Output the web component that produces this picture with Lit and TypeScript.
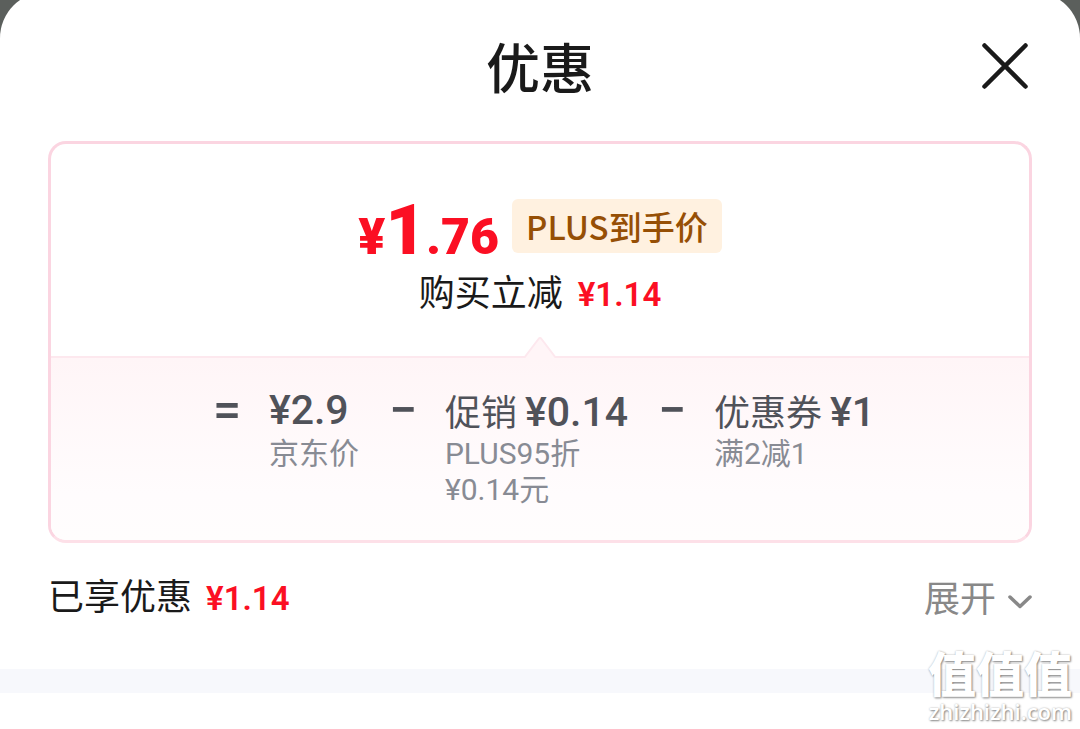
import { LitElement, html, css } from "lit";
import { customElement, state } from "lit/decorators.js";

interface Term {
  op: string;
  label: string;
  amount: string;
  notes: string[];
}

const TERMS: Term[] = [
  { op: "=", label: "", amount: "¥2.9", notes: ["京东价"] },
  { op: "−", label: "促销", amount: "¥0.14", notes: ["PLUS95折", "¥0.14元"] },
  { op: "−", label: "优惠券", amount: "¥1", notes: ["满2减1"] },
];

@customElement("app-root")
export class AppRoot extends LitElement {
  @state() private expanded = false;

  static styles = css`
    :host {
      display: block;
      min-height: 100vh;
      overflow: hidden;
      position: relative;
      background: #5b5f5c;
      color: #1a1a1a;
      font-family: "Noto Sans CJK SC", "Noto Sans", sans-serif;
    }
    * {
      box-sizing: border-box;
    }
    button {
      border: 0;
      padding: 0;
      background: none;
      color: inherit;
      font: inherit;
      cursor: pointer;
    }
    svg {
      display: block;
    }
    h1,
    p {
      margin: 0;
      font-weight: 400;
    }
    .sheet {
      display: flow-root;
      min-height: calc(100vh + 8px);
      margin-top: -8px;
      background: #fff;
      border-radius: 46px 46px 0 0;
    }
    .header {
      display: grid;
      grid-template-columns: 48px 1fr 48px;
      align-items: center;
      padding: 34px 51px 0;
      height: 113px;
    }
    .title {
      grid-column: 2;
      text-align: center;
      font-size: 54px;
      line-height: 80px;
      font-weight: 500;
    }
    .card {
      margin: 36px 48px 0;
      border: 3px solid #fbd5e1;
      border-bottom-color: #fde0e8;
      border-radius: 18px;
      overflow: hidden;
    }
    .summary {
      height: 212px;
      padding-top: 50px;
    }
    .price-row {
      display: flex;
      justify-content: center;
      gap: 13px;
    }
    .price {
      display: flex;
      align-items: baseline;
      font-family: Roboto, sans-serif;
      font-weight: 900;
      font-size: 50px;
      line-height: 72px;
      color: #fb0f23;
    }
    .price-int {
      font-size: 70px;
    }
    .tag {
      height: 54px;
      margin-top: 5px;
      padding: 0 14px;
      border-radius: 6px;
      background: #fff1e0;
      color: #964f05;
      font-size: 33px;
      line-height: 54px;
      font-weight: 500;
    }
    .saving {
      display: flex;
      justify-content: center;
      align-items: baseline;
      gap: 15px;
      font-size: 36px;
      line-height: 34px;
    }
    .red {
      font-family: Roboto, sans-serif;
      font-weight: 600;
      font-size: 33px;
      color: #fb0f23;
    }
    .detail {
      position: relative;
      height: 184px;
      padding-top: 28px;
      border-top: 2px solid #fde8ee;
      background: linear-gradient(#fff5f7, #fffcfd 75%, #fffdfd);
    }
    .notch {
      position: absolute;
      left: 50%;
      top: -22px;
      transform: translateX(-50%);
    }
    .terms {
      display: flex;
      justify-content: center;
      gap: 30px;
      padding-left: 8px;
    }
    .op,
    .amount {
      font-family: Roboto, sans-serif;
      font-weight: 500;
      font-size: 41px;
      line-height: 48px;
      color: #505259;
    }
    .op {
      width: 26px;
      font-size: 50px;
      text-align: center;
    }
    .head {
      display: flex;
      align-items: baseline;
      gap: 8px;
      height: 50px;
      line-height: 48px;
      font-size: 36px;
      color: #505259;
    }
    .note {
      font-family: Roboto, "Noto Sans CJK SC", sans-serif;
      font-size: 30px;
      line-height: 36px;
      color: #888b94;
    }
    .footer {
      display: flex;
      justify-content: space-between;
      align-items: center;
      height: 126px;
      padding: 0 48px 20px;
      font-size: 36px;
      line-height: 48px;
    }
    .got {
      display: flex;
      align-items: baseline;
      gap: 14px;
    }
    .expand {
      display: flex;
      align-items: center;
      gap: 12px;
      color: #888;
    }
    .expand svg {
      margin-top: 12px;
    }
    .divider {
      height: 24px;
      background: #f7f8fc;
    }
    .mark {
      position: absolute;
      right: 8px;
      bottom: 5px;
      color: #fff;
      text-align: right;
      text-shadow: 1px 1px 2px #888, 0 0 2px #bbb;
      pointer-events: none;
    }
    .mark-top {
      font-size: 48px;
      line-height: 54px;
      font-weight: 900;
    }
    .mark-site {
      font-family: "Open Sans", sans-serif;
      font-size: 22px;
      line-height: 26px;
      font-weight: 600;
    }
  `;

  private toggle() {
    this.expanded = !this.expanded;
  }

  render() {
    return html`
      <main class="sheet">
        <header class="header">
          <h1 class="title">优惠</h1>
          <button aria-label="关闭">
            <svg width="48" height="48" viewBox="0 0 48 48" fill="none" stroke="#1a1a1a" stroke-width="4.5" stroke-linecap="round">
              <path d="M3.5 3.5 44.5 44.5M44.5 3.5 3.5 44.5" />
            </svg>
          </button>
        </header>

        <section class="card">
          <div class="summary">
            <div class="price-row">
              <p class="price"><span>¥</span><span class="price-int">1</span><span>.76</span></p>
              <span class="tag">PLUS到手价</span>
            </div>
            <p class="saving">购买立减<span class="red">¥1.14</span></p>
          </div>
          <div class="detail">
            <svg class="notch" width="32" height="24" viewBox="0 0 32 24">
              <path d="M0 23 L14.5 3 Q16 1 17.5 3 L32 23 V24 H0Z" fill="#fff5f7" />
              <path d="M0.5 21.5 L14.5 3 Q16 1 17.5 3 L31.5 21.5" fill="none" stroke="#fde8ee" stroke-width="2" />
            </svg>
            <div class="terms">
              ${TERMS.map(
                (t) => html`
                  <span class="op">${t.op}</span>
                  <div>
                    <p class="head">
                      ${t.label ? html`<span>${t.label}</span>` : ""}<span class="amount">${t.amount}</span>
                    </p>
                    ${t.notes.map((n) => html`<p class="note">${n}</p>`)}
                  </div>
                `
              )}
            </div>
          </div>
        </section>

        <div class="footer">
          <p class="got">已享优惠<span class="red">¥1.14</span></p>
          <button class="expand" aria-expanded=${this.expanded} @click=${this.toggle}>
            展开
            <svg width="24" height="14" viewBox="0 0 24 14" fill="none" stroke="#888" stroke-width="3.5" stroke-linecap="round" stroke-linejoin="round">
              <path d="M2 2 12 11.5 22 2" />
            </svg>
          </button>
        </div>
        <div class="divider"></div>
      </main>
      <div class="mark">
        <div class="mark-top">值值值</div>
        <div class="mark-site">zhizhizhi.com</div>
      </div>
    `;
  }
}
